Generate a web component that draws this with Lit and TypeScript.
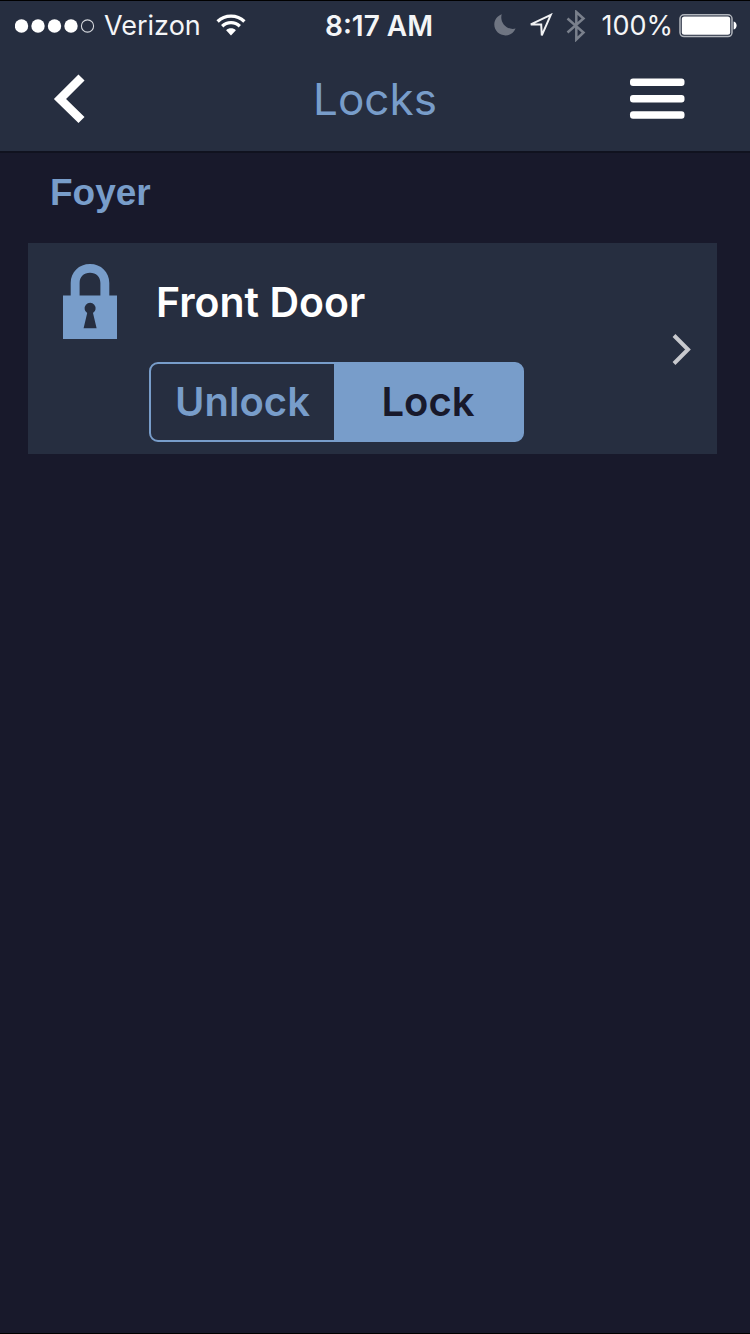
import { LitElement, html, css, svg } from "lit";
import { customElement, state } from "lit/decorators.js";

@customElement("status-bar")
class StatusBar extends LitElement {
  static styles = css`
    :host {
      display: grid;
      grid-template-columns: 1fr auto 1fr;
      align-items: center;
      height: 50px;
      padding: 0 13px 0 15px;
      font-size: 27px;
      line-height: 32px;
      color: #f4f5f7;
    }
    .side {
      display: flex;
      align-items: center;
    }
    .end {
      justify-content: flex-end;
    }
    .carrier {
      margin: 0 15px 0 9px;
    }
    .time {
      padding-left: 6px;
      font-size: 28px;
      font-weight: 600;
    }
    .percent {
      margin: 0 6px 0 15px;
    }
    .arrow {
      margin: 0 13px;
    }
    svg {
      display: block;
      flex: none;
    }
  `;

  render() {
    return html`
      <div class="side">
        <svg width="80" height="14" viewBox="0 0 80 14" aria-label="Signal strength: 4 of 5">
          ${[6.5, 23, 39.5, 56].map((x) => svg`<circle cx=${x} cy="7" r="6.7" fill="#fff" />`)}
          <circle cx="72.5" cy="7" r="6.1" fill="none" stroke="#d5d8dd" stroke-width="1.1" />
        </svg>
        <span class="carrier">Verizon</span>
        <svg width="30" height="24" viewBox="0 0 30 24" aria-label="Wi-Fi">
          <g fill="none" stroke="#fff" stroke-width="3.3">
            <path d="M1.6 7.5C9 .2 21 .2 28.4 7.5" />
            <path d="M6.2 12.2c4.900-4.800 12.700-4.800 17.600 0" />
          </g>
          <path d="M10.1 16.300c2.700-2.600 7.100-2.600 9.800 0L15 21.400z" fill="#fff" />
        </svg>
      </div>
      <span class="time">8:17 AM</span>
      <div class="side end">
        <svg width="22" height="24" viewBox="0 0 22 24" aria-label="Do not disturb">
          <path d="M7.8.3C5.2 7.9 12.7 16.8 21.6 14.6 19.5 19.3 15.8 21.400 11.500 21.400 5.200 21.400.3 16.600.3 10.600.3 6 3.100 1.900 7.800.3z" fill="#6f7582" />
        </svg>
        <svg class="arrow" width="24" height="26" viewBox="0 0 24 26" aria-label="Location">
          <path d="M21.8 1.800L1.800 11.400h10.400l.6 11z" fill="none" stroke="#f1f2f4" stroke-width="2" />
        </svg>
        <svg width="20" height="32" viewBox="0 0 20 32" aria-label="Bluetooth">
          <path d="M1.500 8.500l16 14L10.300 29.500V2l7.200 6.500L1.500 22.500" fill="none" stroke="#7a808c" stroke-width="2.500" />
        </svg>
        <span class="percent">100%</span>
        <svg width="58" height="24" viewBox="0 0 58 24" aria-label="Battery full">
          <rect x="1" y=".8" width="52" height="21.800" rx="4" fill="none" stroke="#b2b6bd" stroke-width="1.500" />
          <rect x="2.800" y="2.600" width="48.400" height="18.200" rx="2.500" fill="#fff" />
          <path d="M54.600 7.500c4 .6 4 7.400 0 8z" fill="#fff" />
        </svg>
      </div>
    `;
  }
}

@customElement("nav-bar")
class NavBar extends LitElement {
  static styles = css`
    :host {
      display: grid;
      grid-template-columns: 1fr auto 1fr;
      align-items: center;
      height: 96px;
      padding: 0 50px 4px;
    }
    button {
      padding: 0;
      border: 0;
      background: none;
      cursor: pointer;
    }
    .menu {
      justify-self: end;
    }
    .back {
      justify-self: start;
    }
    .title {
      margin: 0;
      font-size: 44px;
      line-height: 56px;
      font-weight: 400;
      color: #789dca;
    }
    svg {
      display: block;
    }
  `;

  render() {
    return html`
      <button class="back" aria-label="Back">
        <svg width="40" height="56" viewBox="0 0 40 56">
          <path d="M31.5 6.5L10 28l21.5 21" fill="none" stroke="#fff" stroke-width="8.6" />
        </svg>
      </button>
      <h1 class="title">Locks</h1>
      <button class="menu" aria-label="Menu">
        <svg width="73" height="56" viewBox="0 0 73 56">
          <g fill="#fff">
            <rect x="3" y="7.4" width="54.5" height="7.6" rx="3" />
            <rect x="3" y="24" width="54.5" height="7.6" rx="3" />
            <rect x="3" y="40.2" width="54.5" height="7.6" rx="3" />
          </g>
        </svg>
      </button>
    `;
  }
}

@customElement("lock-card")
class LockCard extends LitElement {
  @state() private locked = true;

  static styles = css`
    :host {
      display: grid;
      grid-template-columns: 86px 1fr auto;
      column-gap: 6px;
      padding: 21px 24px 12px 29px;
      background: #262e40;
    }
    svg {
      display: block;
    }
    .body {
      display: flex;
      flex-direction: column;
      align-items: flex-start;
      gap: 34px;
    }
    .name {
      margin: 0;
      padding: 12px 0 0 7px;
      font-size: 41px;
      line-height: 52px;
      font-weight: 600;
      color: #fff;
    }
    .segments {
      display: grid;
      grid-template-columns: 183px 188px;
      max-width: 100%;
      border: 2px solid #789dca;
      border-radius: 9px;
      background: linear-gradient(#789dca, #789dca) border-box;
    }
    .segment {
      height: 76px;
      padding: 0;
      border: 0;
      border-radius: 7px 0 0 7px;
      background: #262e40;
      font: inherit;
      font-size: 40px;
      font-weight: 600;
      line-height: 52px;
      color: #789dca;
      cursor: pointer;
    }
    .segment:last-child {
      border-radius: 0 7px 7px 0;
    }
    .segment[aria-pressed="true"] {
      background: #789dca;
      color: #18192b;
    }
    .more {
      align-self: center;
      padding: 0 0 8px;
      border: 0;
      background: none;
      cursor: pointer;
    }
  `;

  render() {
    return html`
      <svg width="66" height="76" viewBox="0 0 66 76" aria-hidden="true">
        <path
          fill="#789dca"
          fill-rule="evenodd"
          d="M6 31.600h7.700V19C13.700 8 22 0 33 0s19.300 8 19.300 19v12.600H60V75H6zM22.600 31.600h20.800V19c0-6.200-4.300-10.300-10.400-10.300S22.600 12.800 22.600 19zM30.200 49L26.600 64.300h13L36 49a5.500 5.500 0 1 0-5.800 0z"
        />
      </svg>
      <div class="body">
        <h3 class="name">Front Door</h3>
        <div class="segments" role="group" aria-label="Front Door">
          <button class="segment" aria-pressed=${!this.locked} @click=${() => (this.locked = false)}>Unlock</button>
          <button class="segment" aria-pressed=${this.locked} @click=${() => (this.locked = true)}>Lock</button>
        </div>
      </div>
      <button class="more" aria-label="Front Door details">
        <svg width="24" height="36" viewBox="0 0 24 36">
          <path d="M5 4.500L19 18.500l-14 14" fill="none" stroke="#c8c9ce" stroke-width="4" />
        </svg>
      </button>
    `;
  }
}

@customElement("app-root")
class AppRoot extends LitElement {
  static styles = css`
    :host {
      display: block;
      box-sizing: border-box;
      min-height: 100vh;
      border: solid #000;
      border-width: 1px 0;
      background: #18192b;
      font-family: Inter, "Liberation Sans", sans-serif;
    }
    .header {
      background: #262e40;
      box-sizing: content-box;
      border-bottom: 2px solid #10121f;
    }
    nav-bar {
      box-sizing: border-box;
      height: 100px;
    }
    .content {
      padding: 18px 33px 0 28px;
    }
    .room {
      margin: 0 0 28px;
      padding-left: 22px;
      font-family: "Liberation Sans", sans-serif;
      font-size: 37px;
      line-height: 44px;
      font-weight: 700;
      color: #789dca;
    }
  `;

  render() {
    return html`
      <header class="header">
        <status-bar></status-bar>
        <nav-bar></nav-bar>
      </header>
      <main class="content">
        <h2 class="room">Foyer</h2>
        <lock-card></lock-card>
      </main>
    `;
  }
}
